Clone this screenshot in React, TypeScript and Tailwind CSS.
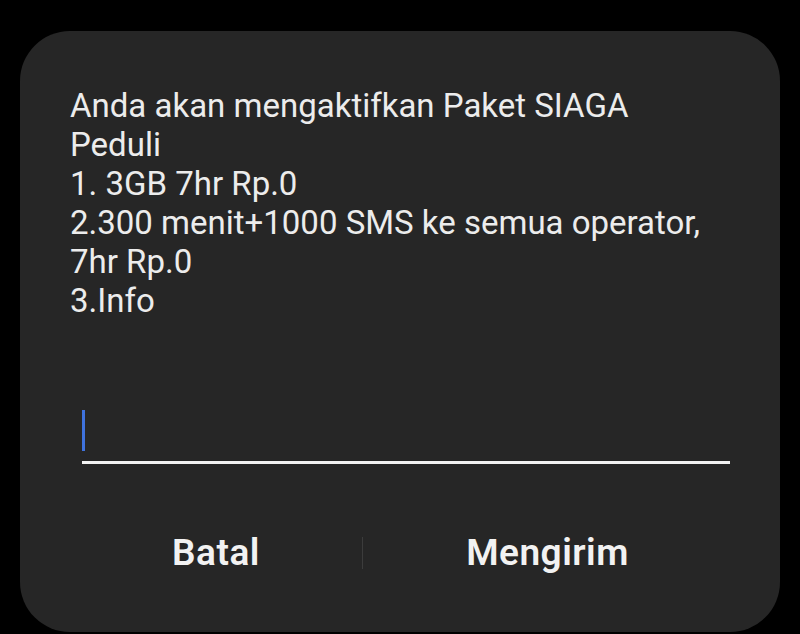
import React from 'react';

const lines = [
  'Anda akan mengaktifkan Paket SIAGA',
  'Peduli',
  '1. 3GB 7hr Rp.0',
  '2.300 menit+1000 SMS ke semua operator,',
  '7hr Rp.0',
  '3.Info',
];

export default function App() {
  return (
    <div className="h-[634px] w-[800px] overflow-hidden bg-black px-[20px] pt-[31px] font-['Roboto',sans-serif]">
      <div className="h-[601px] rounded-[50px] bg-[#262626] pt-[55px]">
        <div className="pl-[50px] text-[33px] leading-[39px] text-[#ececec]">
          {lines.map((l) => (
            <div key={l} className="whitespace-nowrap">{l}</div>
          ))}
        </div>

        <div className="ml-[62px] mt-[90px] w-[648px] border-b-[3px] border-[#f2f2f2] pb-[10px]">
          <div className="h-[41px] w-[3px] bg-[#3f72dd]" />
        </div>

        <div className="ml-[50px] mt-[59px] flex h-[60px] w-[662px] items-center">
          <button className="flex h-full w-[292px] items-center justify-center text-[37px] font-semibold tracking-[0.5px] text-[#f2f2f2]">
            Batal
          </button>
          <div className="h-[32px] w-px bg-[#3c3c3c]" />
          <button className="flex h-full flex-1 items-center justify-center text-[37px] font-semibold tracking-[0.5px] text-[#f2f2f2]">
            Mengirim
          </button>
        </div>
      </div>
    </div>
  );
}
